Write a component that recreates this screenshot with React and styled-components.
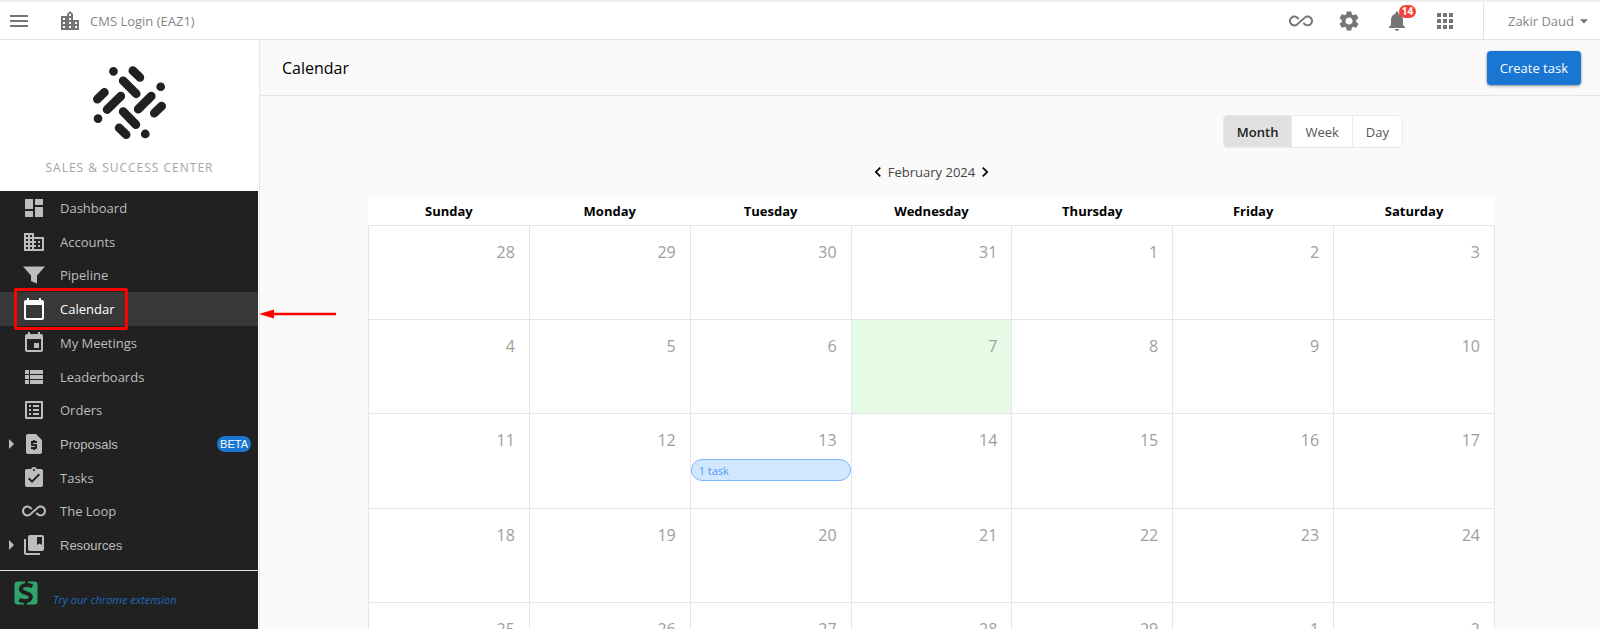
import React, { useState } from "react";
import styled, { createGlobalStyle, css } from "styled-components";
import {
  MdMenu, MdLocationCity, MdAllInclusive, MdSettings, MdNotifications, MdApps,
  MdArrowDropDown, MdDashboard, MdBusiness, MdCalendarToday, MdEvent, MdViewList,
  MdListAlt, MdRequestPage, MdAssignmentTurnedIn, MdCollectionsBookmark,
  MdArrowRight, MdChevronLeft, MdChevronRight,
} from "react-icons/md";

const GlobalStyle = createGlobalStyle`
  *, *::before, *::after { box-sizing: border-box; }
  body {
    margin: 0;
    background: #fafafa;
    font-family: "Segoe UI", "Open Sans", "Noto Sans", sans-serif;
    font-size: 13px;
    color: #212121;
  }
  button { font: inherit; color: inherit; border: 0; background: none; padding: 0; cursor: pointer; }
  a { color: inherit; text-decoration: none; }
  svg { display: block; flex: none; }
`;

const Page = styled.div`
  display: flex;
  flex-direction: column;
  height: 100vh;
  overflow: hidden;
`;

const TopBar = styled.header`
  display: flex;
  flex: none;
  align-items: stretch;
  height: 40px;
  padding-left: 7px;
  background: #fff;
  border-top: 2px solid #eeeeee;
  border-bottom: 1px solid #e4e4e4;
  color: #757575;
`;

const IconButton = styled.button`
  display: flex;
  align-items: center;
  position: relative;
`;

const Company = styled.a`
  display: flex;
  align-items: center;
  gap: 8px;
  margin-left: 27px;
  color: #858585;

  svg { color: #757575; }
`;

const Tools = styled.div`
  display: flex;
  gap: 24px;
  margin-left: auto;
  margin-right: 26px;
`;

const CountBadge = styled.span`
  position: absolute;
  top: 3px;
  left: 14px;
  width: 17px;
  border-radius: 7px;
  background: #f44336;
  color: #fff;
  font-size: 10px;
  font-weight: 700;
  line-height: 13px;
  text-align: center;
`;

const UserButton = styled.button`
  display: flex;
  align-items: center;
  padding: 0 6px 0 24px;
  border-left: 1px solid #e4e4e4;
  color: #858585;

  svg { color: #757575; }
`;

const Body = styled.div`
  display: flex;
  flex: 1;
  min-height: 0;
`;

const Sidebar = styled.aside`
  display: flex;
  flex: none;
  flex-direction: column;
  width: 260px;
  border-right: 1px solid #e8e8e8;
  background: #fff;
`;

const Brand = styled.div`
  display: flex;
  flex: none;
  flex-direction: column;
  align-items: center;
  gap: 19px;
  padding: 26px 0 13px;
`;

const BrandName = styled.span`
  color: #a3a3a3;
  font-size: 12px;
  line-height: 20px;
  letter-spacing: 1px;
`;

const Nav = styled.nav`
  display: flex;
  flex: 1;
  flex-direction: column;
  margin-right: 1px;
  padding-bottom: 8px;
  background: #212121;
`;

const NavItem = styled.a`
  display: flex;
  flex: 1;
  align-items: center;
  padding-right: 7px;
  color: #bdbdbd;
  font-family: ${(p) => (p.$group ? '"Liberation Sans", Arial, sans-serif' : "inherit")};

  ${(p) =>
    p.$active &&
    css`
      background: #383838;
      color: #fff;
    `}
`;

const Caret = styled.span`
  display: flex;
  justify-content: center;
  width: 22px;
`;

const NavLabel = styled.span`
  margin-left: 14px;
`;

const Beta = styled.span`
  margin-left: auto;
  padding: 0 3px;
  border-radius: 8px;
  background: #1976d2;
  color: #fff;
  font-size: 11px;
  line-height: 16px;
`;

const Extension = styled.a`
  display: flex;
  flex: none;
  gap: 15px;
  height: 59px;
  margin-right: 1px;
  padding: 10px 14px;
  border-top: 1px solid #e0e0e0;
  background: #212121;
  color: #1f6ac0;
  font-size: 11px;
  font-style: italic;
  line-height: 16px;

  span { margin-top: 11px; }
`;

const Highlight = styled.div`
  position: absolute;
  top: 288px;
  left: 14px;
  width: 114px;
  height: 42px;
  border: 3px solid #f00;
  border-radius: 2px;
  pointer-events: none;
`;

const Pointer = styled.svg`
  position: absolute;
  top: 308px;
  left: 259px;
  pointer-events: none;
`;

const Main = styled.main`
  flex: 1;
  min-width: 0;
  overflow: hidden;
`;

const TitleBar = styled.div`
  display: flex;
  align-items: center;
  justify-content: space-between;
  height: 56px;
  padding: 0 19px 0 22px;
  border-bottom: 1px solid #e6e6e6;
`;

const Title = styled.h1`
  margin: 0;
  color: #000;
  font-size: 16px;
  font-weight: 500;
`;

const PrimaryButton = styled.button`
  height: 34px;
  padding: 0 13px;
  border-radius: 4px;
  background: #1976d2;
  box-shadow: 0 1px 3px rgba(0, 0, 0, 0.45);
  color: #fff;
  font-weight: 500;
`;

const CalendarArea = styled.section`
  display: flex;
  flex-direction: column;
  padding: 19px 105px 0 108px;
`;

const ViewSwitch = styled.div`
  display: flex;
  align-self: flex-end;
  height: 33px;
  margin-right: 92px;
  overflow: hidden;
  border: 1px solid #eaeaea;
  border-radius: 4px;
  background: #fff;
`;

const ViewButton = styled.button`
  padding: 0 13px;
  border-left: 1px solid #eaeaea;
  color: #555;

  &:first-child { border-left: 0; }

  ${(p) =>
    p.$active &&
    css`
      background: #e0e0e0;
      color: #212121;
      font-weight: 600;
    `}
`;

const Pager = styled.div`
  display: flex;
  align-items: center;
  align-self: center;
  height: 20px;
  margin: 14px 0 15px;
  color: #444;

  button { color: #000; }
`;

const Grid = styled.table`
  width: 100%;
  table-layout: fixed;
  border-collapse: collapse;
  background: #fff;
`;

const DayName = styled.th`
  height: 28px;
  padding: 0;
  color: #000;
  font-size: 13px;
  font-weight: 700;
`;

const DayCell = styled.td`
  height: 15vh;
  padding: 14px 0 0;
  border: 1px solid #e6e6e6;
  background: ${(p) => (p.$today ? "#e6fbe6" : "#fff")};
  vertical-align: top;
`;

const DayNumber = styled.span`
  display: block;
  padding-right: 14px;
  color: #9e9e9e;
  font-size: 16px;
  line-height: 24px;
  text-align: right;
`;

const TaskPill = styled.button`
  display: block;
  width: 100%;
  height: 22px;
  margin-top: 7px;
  padding: 0 7px;
  border: 1px solid #7fb8f8;
  border-radius: 11px;
  background: #d1e7ff;
  color: #4d9bf5;
  font-size: 11px;
  text-align: left;
`;

const FunnelIcon = () => (
  <svg width="24" height="24" viewBox="0 0 24 24" fill="currentColor">
    <path d="M1 3.500h22l-8 9v8l-6-2.500v-5.500z" />
  </svg>
);

const LogoMark = () => (
  <svg width="73" height="73" viewBox="280 200 218 218" fill="none" stroke="#212121" strokeWidth="26" strokeLinecap="round">
    <path d="M341 216h.1M482 262h.1M295 357h.1M436 403h.1" />
    <path d="M399 214l21 20M370 244l39 39M314 279l-21 20M363 290l-41 40M454 290l-39 39M485 320l-22 21M370 336l38 39M358 385l21 20" />
  </svg>
);

const ExtensionMark = () => (
  <svg width="24" height="24" viewBox="0 0 24 24">
    <rect x="0.500" y="0.500" width="23" height="23" rx="3" fill="#2fa56c" />
    <path d="M12.500 0v4M11.500 20v4" stroke="#212121" strokeWidth="3" />
    <path d="M18.500 5.200C16.500 4.300 14.500 3.900 12.500 3.900 9 3.900 6.900 5.600 6.900 8c0 5.200 10 3 10 7.800 0 2.700-2.300 4.300-5.700 4.300-2.200 0-4.200-.4-6-1.300" fill="none" stroke="#212121" strokeWidth="4" />
  </svg>
);

const NAV = [
  { label: "Dashboard", icon: MdDashboard },
  { label: "Accounts", icon: MdBusiness },
  { label: "Pipeline", icon: FunnelIcon },
  { label: "Calendar", icon: MdCalendarToday, active: true },
  { label: "My Meetings", icon: MdEvent },
  { label: "Leaderboards", icon: MdViewList },
  { label: "Orders", icon: MdListAlt },
  { label: "Proposals", icon: MdRequestPage, group: true, beta: true },
  { label: "Tasks", icon: MdAssignmentTurnedIn },
  { label: "The Loop", icon: MdAllInclusive },
  { label: "Resources", icon: MdCollectionsBookmark, group: true },
];

const DAYS = ["Sunday", "Monday", "Tuesday", "Wednesday", "Thursday", "Friday", "Saturday"];

const WEEKS = [
  [28, 29, 30, 31, 1, 2, 3],
  [4, 5, 6, 7, 8, 9, 10],
  [11, 12, 13, 14, 15, 16, 17],
  [18, 19, 20, 21, 22, 23, 24],
  [25, 26, 27, 28, 29, 1, 2],
];

export default function App() {
  const [view, setView] = useState("Month");

  return (
    <Page>
      <GlobalStyle />
      <TopBar>
        <IconButton aria-label="Menu"><MdMenu size={24} /></IconButton>
        <Company href="#">
          <MdLocationCity size={24} />
          CMS Login (EAZ1)
        </Company>
        <Tools>
          <IconButton aria-label="The Loop"><MdAllInclusive size={24} /></IconButton>
          <IconButton aria-label="Settings"><MdSettings size={24} /></IconButton>
          <IconButton aria-label="Notifications">
            <MdNotifications size={24} />
            <CountBadge>14</CountBadge>
          </IconButton>
          <IconButton aria-label="Apps"><MdApps size={24} /></IconButton>
        </Tools>
        <UserButton>
          Zakir Daud
          <MdArrowDropDown size={20} />
        </UserButton>
      </TopBar>
      <Body>
        <Sidebar>
          <Brand>
            <LogoMark />
            <BrandName>SALES &amp; SUCCESS CENTER</BrandName>
          </Brand>
          <Nav>
            {NAV.map(({ label, icon: Icon, active, group, beta }) => (
              <NavItem key={label} href="#" $active={active} $group={group}>
                <Caret>{group && <MdArrowRight size={24} />}</Caret>
                <Icon size={24} />
                <NavLabel>{label}</NavLabel>
                {beta && <Beta>BETA</Beta>}
              </NavItem>
            ))}
          </Nav>
          <Extension href="#">
            <ExtensionMark />
            <span>Try our chrome extension</span>
          </Extension>
        </Sidebar>
        <Main>
          <TitleBar>
            <Title>Calendar</Title>
            <PrimaryButton>Create task</PrimaryButton>
          </TitleBar>
          <CalendarArea>
            <ViewSwitch>
              {["Month", "Week", "Day"].map((name) => (
                <ViewButton key={name} $active={view === name} onClick={() => setView(name)}>
                  {name}
                </ViewButton>
              ))}
            </ViewSwitch>
            <Pager>
              <button aria-label="Previous month"><MdChevronLeft size={20} /></button>
              February 2024
              <button aria-label="Next month"><MdChevronRight size={20} /></button>
            </Pager>
            <Grid>
              <thead>
                <tr>{DAYS.map((d) => <DayName key={d} scope="col">{d}</DayName>)}</tr>
              </thead>
              <tbody>
                {WEEKS.map((week, w) => (
                  <tr key={w}>
                    {week.map((day, d) => (
                      <DayCell key={d} $today={w === 1 && day === 7}>
                        <DayNumber>{day}</DayNumber>
                        {w === 2 && day === 13 && <TaskPill>1 task</TaskPill>}
                      </DayCell>
                    ))}
                  </tr>
                ))}
              </tbody>
            </Grid>
          </CalendarArea>
        </Main>
      </Body>
      <Highlight />
      <Pointer width="78" height="12" viewBox="0 0 78 12">
        <path d="M14 6h63" stroke="#f00" strokeWidth="2.500" />
        <path d="M0 6l15-4.500v9z" fill="#f00" />
      </Pointer>
    </Page>
  );
}
